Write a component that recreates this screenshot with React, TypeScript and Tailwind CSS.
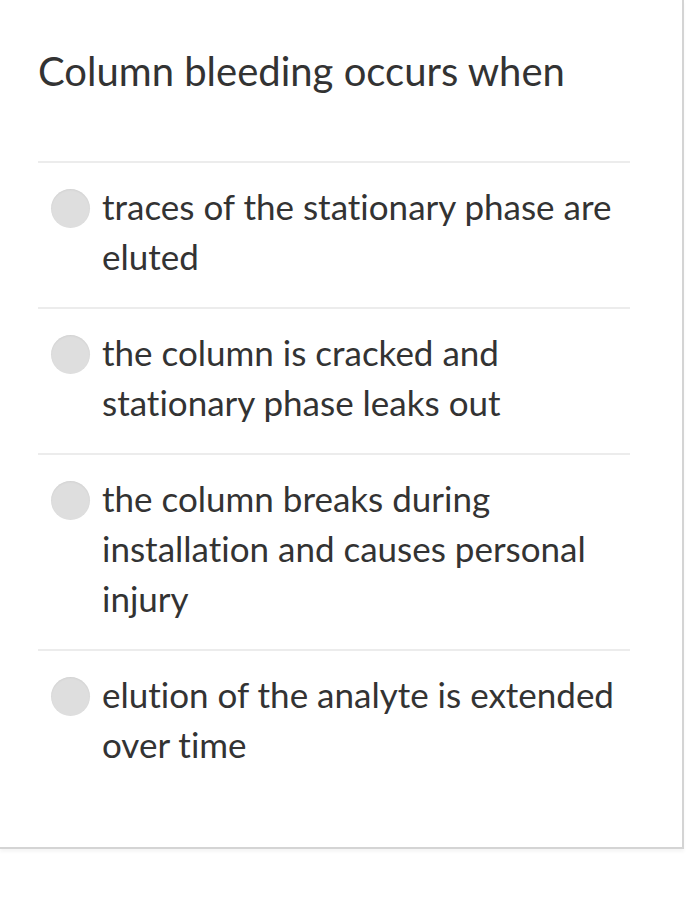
import React from "react";

const options = [
  "traces of the stationary phase are eluted",
  "the column is cracked and stationary phase leaks out",
  "the column breaks during installation and causes personal injury",
  "elution of the analyte is extended over time",
];

export default function App() {
  return (
    <div className="w-[686px] h-[904px] bg-white [font-variant-ligatures:none]" style={{ fontFamily: "Lato, 'Open Sans', sans-serif" }}>
      <div className="w-[684px] h-[849px] border-r-2 border-b-2 border-[#d4d4d4] bg-white pl-[38px] pr-[54px] pt-[46px] shadow-[0_3px_3px_rgba(0,0,0,0.04)]">
        <h1 className="text-[40px] leading-[50px] text-[#333] font-normal whitespace-nowrap">
          Column bleeding occurs when
        </h1>
        <div className="mt-[65px] w-[592px] border-t-2 border-[#ececec]">
          {options.map((o, i) => (
            <div key={i} className="flex gap-[12px] pl-[13px] pt-[18px] pb-[26px] border-b-2 border-[#ececec] last:border-b-0">
              <div className="mt-[8px] w-[39px] h-[39px] shrink-0 rounded-full bg-[#dedede] shadow-[inset_0_1px_2px_rgba(0,0,0,0.06)]" />
              <div className="w-[530px] shrink-0 text-[35px] leading-[50px] text-[#333]">{o}</div>
            </div>
          ))}
        </div>
      </div>
    </div>
  );
}
